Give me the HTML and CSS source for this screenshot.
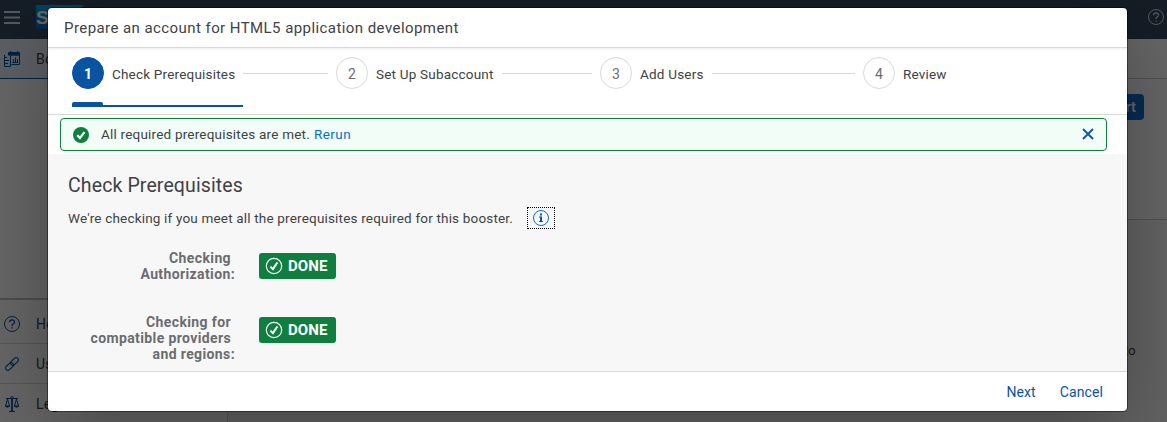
FILE: index.html
```html
<!DOCTYPE html>
<html lang="en">
<head>
<meta charset="utf-8">
<title>Prepare an account for HTML5 application development</title>
<link rel="stylesheet" href="styles.css">
</head>
<body>
<div class="shell">
  <header class="topbar">
    <svg class="burger" width="16" height="13" viewBox="0 0 16 13"><path d="M0 1h16M0 6.500h16M0 12h16" stroke="#d1e0ee" stroke-width="1.800"/></svg>
    <svg class="logo" width="48" height="24" viewBox="0 0 48 24"><defs><linearGradient id="lg" x1="0" y1="0" x2="0" y2="1"><stop offset="0" stop-color="#00aeef"/><stop offset="1" stop-color="#1661be"/></linearGradient></defs><path d="M0 0h48L24 24H0z" fill="url(#lg)"/><text class="logo-text" x="0" y="18.500">S</text></svg>
    <svg class="help" width="16" height="16" viewBox="0 0 16 16" fill="none" stroke="#d1e0ee"><circle cx="8" cy="8" r="7.500"/><path d="M5.600 6.200C5.600 3.200 10.600 3.200 10.500 6.200 10.400 7.800 8 7.800 8 10M8 11.300v1.300" stroke-width="1.300"/></svg>
  </header>
  <div class="body">
    <nav class="sidebar">
      <div class="nav-item selected">
        <svg width="16" height="16" viewBox="0 0 16 16" fill="none" stroke="#0854a0"><path d="M4.500 1.500h11v2.500h-11zM15.500 4v9.500h-8M6.500 0v2M13.500 0v2M.5 4v11.500h6V5M1 6.500h2M1 9.500h4M1 12.500h3M9.500 11V8M11.500 11V6.500M13.500 11V8M8.500 11.500h5.500"/><path d="M4.500 2h11v2h-11z" fill="#0854a0"/></svg>
        <span>Boosters</span>
      </div>
      <div class="nav-space"></div>
      <div class="nav-item">
        <svg width="16" height="16" viewBox="0 0 16 16" fill="none" stroke="#0854a0"><circle cx="8" cy="8" r="7.500"/><path d="M5.600 6.200C5.600 3.200 10.600 3.200 10.500 6.200 10.400 7.800 8 7.800 8 10M8 11.300v1.300" stroke-width="1.300"/></svg>
        <span>Help</span>
      </div>
      <div class="nav-item">
        <svg width="16" height="16" viewBox="0 0 16 16" fill="none" stroke="#0854a0" stroke-width="1.100"><rect x="6" y="3.200" width="9" height="4.600" rx="2.300" transform="rotate(-45 10.500 5.500)"/><rect x="1" y="8.200" width="9" height="4.600" rx="2.300" transform="rotate(-45 5.500 10.500)"/></svg>
        <span>Useful Links</span>
      </div>
      <div class="nav-item">
        <svg width="16" height="16" viewBox="0 0 16 16" fill="none" stroke="#0854a0"><circle cx="8" cy="1.800" r="1.300"/><path d="M8 3v12" stroke-width="1.800"/><path d="M5 15.500h6M2 2.500h12M3.500 3L1.500 10M3.500 3L5.500 10M12.500 3L10.500 10M12.500 3L14.500 10"/><path d="M1.200 10h4.600q-2.300 2.500-4.600 0zM10.200 10h4.600q-2.300 2.500-4.600 0z" fill="#0854a0"/></svg>
        <span>Legal Information</span>
      </div>
    </nav>
    <main class="page">
      <div class="crumbs"></div>
      <div class="hero"><span class="start">Start</span></div>
      <div class="page-text">to</div>
    </main>
  </div>
</div>
<div class="overlay"></div>
<section class="dialog">
  <header class="dialog-title"><span class="t-title">Prepare an account for HTML5 application development</span></header>
  <div class="steps">
    <div class="step active"><span class="num">1</span><span class="label">Check Prerequisites</span><i class="line"></i></div>
    <div class="step"><span class="num">2</span><span class="label">Set Up Subaccount</span><i class="line"></i></div>
    <div class="step"><span class="num">3</span><span class="label">Add Users</span><i class="line"></i></div>
    <div class="step"><span class="num">4</span><span class="label">Review</span></div>
    <div class="marker"><i></i></div>
  </div>
  <div class="strip-wrap">
    <div class="strip">
      <svg width="16" height="16" viewBox="0 0 16 16"><circle cx="8" cy="8" r="8" fill="#107e3e"/><path d="M4.200 8.300l2.700 2.800 4.600-6" fill="none" stroke="#fff" stroke-width="2.200"/></svg>
      <span class="message">All required prerequisites are met.</span>
      <a class="rerun">Rerun</a>
      <svg class="close" width="12" height="12" viewBox="0 0 12 12"><path d="M1 1l10 10M11 1L1 11" stroke="#0854a0" stroke-width="1.800"/></svg>
    </div>
  </div>
  <div class="content">
    <h2><span>Check Prerequisites</span></h2>
    <div class="intro">
      <span class="intro-text">We're checking if you meet all the prerequisites required for this booster.</span>
      <span class="info"><svg width="16" height="16" viewBox="0 0 16 16"><circle cx="8" cy="8" r="7.500" fill="none" stroke="#0a6ed1"/><path d="M7 3.500h2v2H7zM6 6.500h3V11h1v1H6v-1h1V7.500H6z" fill="#0854a0"/></svg></span>
    </div>
    <div class="check first">
      <div class="check-label"><span class="pad">Checking</span><span>Authorization:</span></div>
      <span class="done"><svg width="18" height="18" viewBox="0 0 18 18" fill="none" stroke="#fff"><circle cx="9" cy="9" r="7.700" stroke-width="1.200"/><path d="M5.400 9.600l2.500 2.500 4.500-6.600" stroke-width="2"/></svg><b>DONE</b></span>
    </div>
    <div class="check">
      <div class="check-label"><span class="pad">Checking for</span><span class="pad">compatible providers</span><span>and regions:</span></div>
      <span class="done"><svg width="18" height="18" viewBox="0 0 18 18" fill="none" stroke="#fff"><circle cx="9" cy="9" r="7.700" stroke-width="1.200"/><path d="M5.400 9.600l2.500 2.500 4.500-6.600" stroke-width="2"/></svg><b>DONE</b></span>
    </div>
  </div>
  <footer class="actions"><a class="next">Next</a><a class="cancel">Cancel</a></footer>
</section>
</body>
</html>
```
FILE: styles.css
```css
* { box-sizing: border-box; }
body { margin: 0; height: 422px; overflow: hidden; font: 13.5px/16px Roboto, "Noto Sans", sans-serif; letter-spacing: .2px; color: #3e4246; }
svg { display: block; flex: none; }
span, a { white-space: nowrap; }

.shell { height: 422px; overflow: hidden; display: flex; flex-direction: column; background: #f7f7f7; }
.topbar { height: 39px; flex: none; background: #354a5f; display: flex; align-items: center; padding: 0 3px 5px 4px; }
.logo { margin-left: 16px; }
.logo-text { font: bold 19px "Liberation Sans", sans-serif; fill: #fff; }
.help { margin-left: auto; }
.body { display: flex; flex: 1; min-height: 0; }
.sidebar { width: 228px; background: #fff; border-right: 1px solid #d9d9d9; display: flex; flex-direction: column; }
.nav-item { height: 40px; flex: none; display: flex; align-items: center; gap: 16px; padding-left: 4px; border-bottom: 1px solid #d9d9d9; font-size: 14px; }
.nav-item.selected { background: #e5f0fa; border-bottom-color: #0854a0; }
.nav-space { height: 221px; flex: none; border-bottom: 2px solid #c4c4c4; margin-bottom: 4px; }
.page { flex: 1; display: flex; flex-direction: column; }
.crumbs { height: 40px; flex: none; background: #fff; border-bottom: 1px solid #c9c9c9; }
.hero { height: 141px; flex: none; background: #fff; border-bottom: 1px solid #c9c9c9; display: flex; justify-content: flex-end; padding: 15px 23px 0 0; }
.start { height: 26px; padding: 0 8px; border-radius: 4px; background: #0a6ed1; color: #fff; font-size: 14px; font-weight: bold; line-height: 26px; }
.page-text { text-align: right; padding: 122px 31px 0 0; }

.overlay { position: absolute; inset: 0; background: rgba(0, 0, 0, .6); }
.dialog { position: absolute; left: 48px; top: 8px; width: 1079px; height: 403px; border-radius: 4px; background: #fff; overflow: hidden; display: flex; flex-direction: column; box-shadow: 0 0 0 1px rgba(0, 0, 0, .42), 0 20px 80px rgba(0, 0, 0, .3); }
.dialog-title { height: 40px; flex: none; padding: 12px 16px 0; border-bottom: 1px solid #d9d9d9; box-shadow: 0 1px 2px rgba(0, 0, 0, .08); font-size: 15px; }
.t-title { letter-spacing: .43px; }

.steps { height: 67px; flex: none; padding: 9px 0 0 24px; display: grid; grid-template-columns: 264px 264px 263px 264px; grid-template-rows: 32px auto; border-bottom: 1px solid #d9d9d9; }
.step { display: flex; align-items: center; }
.num { width: 32px; height: 32px; flex: none; border: 1px solid #d9d9d9; border-radius: 50%; text-align: center; line-height: 32px; font-size: 14px; color: #6a6d70; }
.active .num { background: #0854a0; border-color: #0854a0; color: #fff; font-weight: bold; }
.label { margin: 2px 8px 0; }
.line { flex: 1; height: 1px; background: #d9d9d9; margin-right: 8px; }
.marker { width: 171px; height: 5px; margin-top: 13px; border-bottom: 2px solid #0854a0; }
.marker i { display: block; width: 31px; height: 3px; background: #0854a0; border-radius: 2px 2px 0 0; }

.strip-wrap { height: 39px; flex: none; padding: 3px 20px 0 12px; }
.strip { height: 33px; border: 1px solid #107e3e; border-radius: 4px; background: #f1fdf6; display: flex; align-items: center; padding: 0 12px; }
.message { margin: 0 0 1px 12px; }
.rerun { margin: 0 0 1px 4px; color: #0a6ed1; letter-spacing: .45px; }
.close { margin: 0 0 2px auto; }

.content { height: 217px; flex: none; background: #f7f7f7; padding: 20px 20px 0; }
h2 { margin: 0; font-size: 19.5px; line-height: 24px; font-weight: normal; letter-spacing: .12px; }
.intro { height: 22px; margin-top: 9px; display: flex; align-items: center; }
.intro-text { width: 459px; letter-spacing: .18px; }
.info { width: 28px; height: 22px; border: 1px dotted #000; display: grid; place-items: center; }
.check { display: flex; gap: 24px; margin-top: 32px; align-items: flex-start; }
.check.first { margin-top: 21px; }
.check-label { width: 167px; display: flex; flex-direction: column; align-items: flex-end; color: #6a6d70; font-size: 14px; font-weight: bold; letter-spacing: .38px; }
.pad { margin-right: 4px; }
.done { width: 77px; height: 26px; margin-top: 3px; display: flex; align-items: center; gap: 5px; padding-left: 6px; border-radius: 3px; background: #107e3e; color: #fff; font-size: 15px; letter-spacing: .1px; }

.actions { height: 40px; flex: none; border-top: 1px solid #d9d9d9; display: flex; justify-content: flex-end; align-items: center; gap: 24px; padding: 1px 24px 0 0; color: #0854a0; font-size: 14px; letter-spacing: .1px; }
```
